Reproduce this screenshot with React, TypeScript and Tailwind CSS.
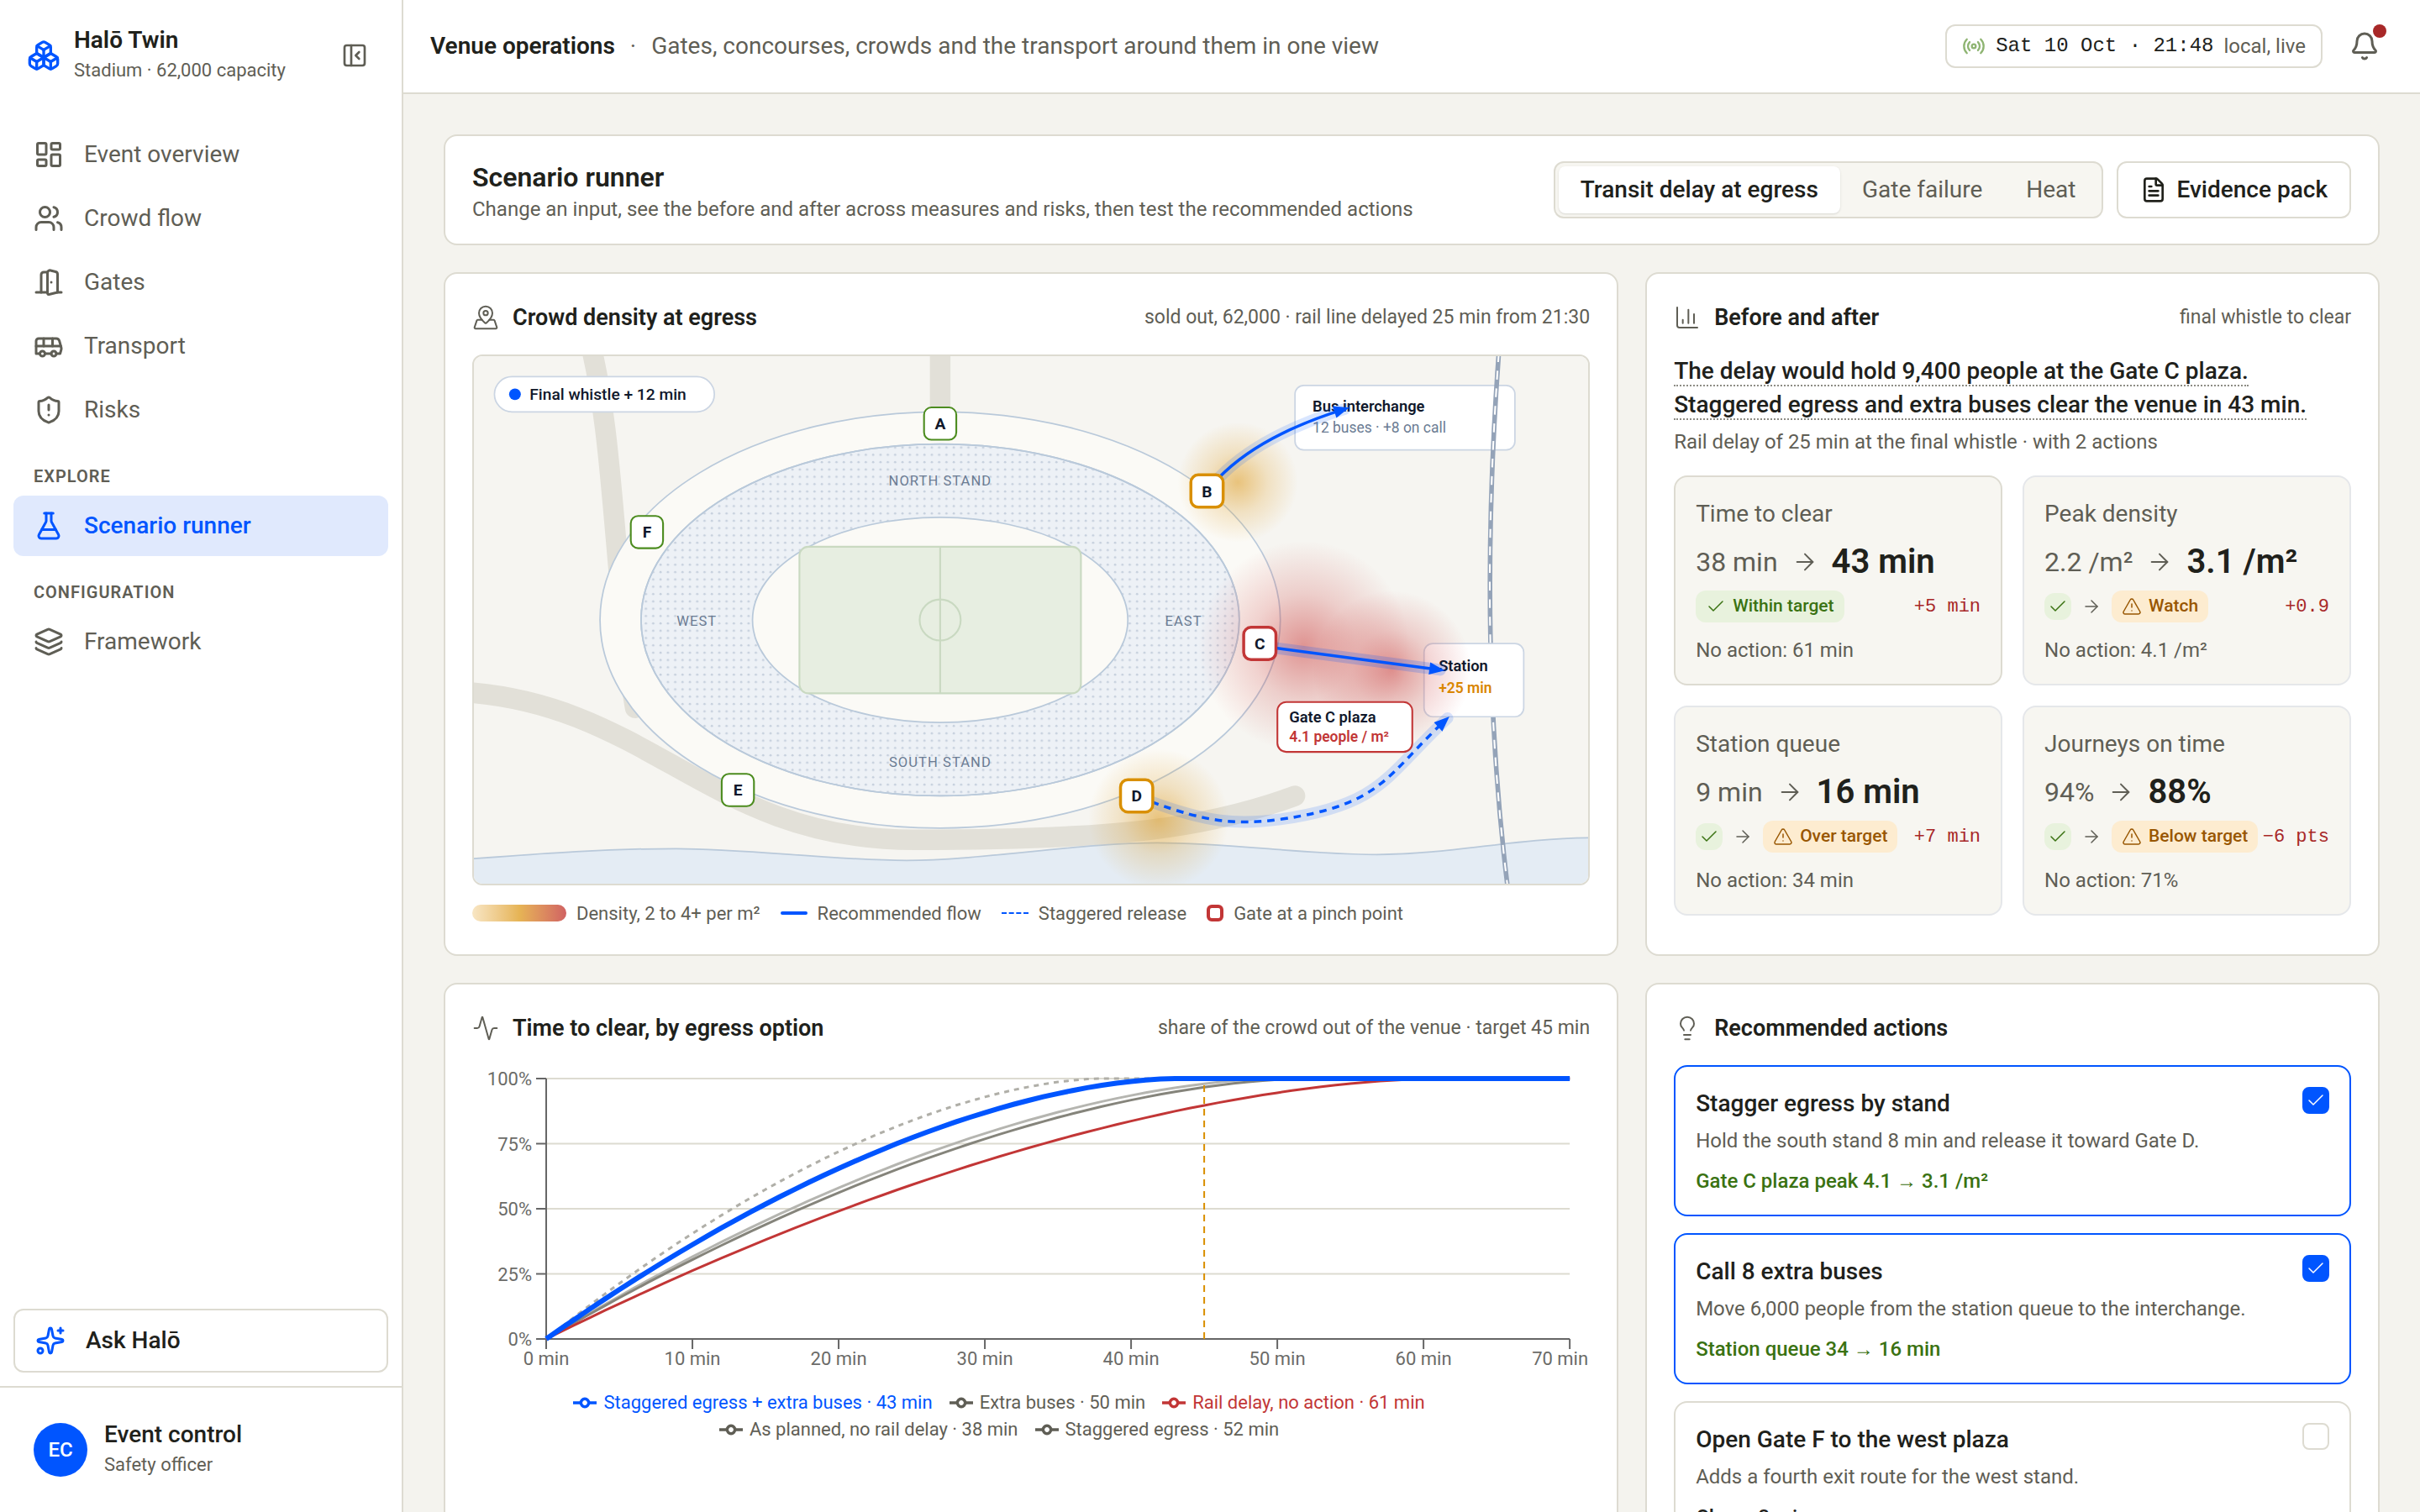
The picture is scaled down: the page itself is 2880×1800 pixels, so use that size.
import React, { useState } from 'react'
import {
  Activity,
  ArrowRight,
  Bell,
  Boxes,
  Bus,
  ChartColumn,
  Check,
  FileText,
  FlaskConical,
  Layers,
  LayoutDashboard,
  Lightbulb,
  MapPinned,
  PanelLeftClose,
  Radio,
  ShieldAlert,
  Sparkles,
  TriangleAlert,
  Users,
  type LucideIcon
} from 'lucide-react'

interface NavEntry {
  icon: LucideIcon | React.FC<{ className?: string }>
  label: string
}

interface Measure {
  title: string
  before: string
  after: string
  wasOnTarget: boolean
  status: string
  delta: string
  noAction: string
}

interface Action {
  id: string
  title: string
  description: string
  effect: string
}

// Double door, used for the gates page
const DoorIcon: React.FC<{ className?: string }> = ({ className }) => (
  <svg viewBox="0 0 24 24" fill="none" stroke="currentColor" strokeWidth={2} strokeLinecap="round" strokeLinejoin="round" className={className}>
    <path d="M11 20H2" />
    <path d="M11 4.562v16.157a1 1 0 0 0 1.242.97L19 20V5.562a2 2 0 0 0-1.515-1.94l-4-1A2 2 0 0 0 11 4.561z" />
    <path d="M11 4H8a2 2 0 0 0-2 2v14" />
    <path d="M14 12h.01" />
    <path d="M22 20h-3" />
  </svg>
)

const MAIN_NAV: NavEntry[] = [
  { icon: LayoutDashboard, label: 'Event overview' },
  { icon: Users, label: 'Crowd flow' },
  { icon: DoorIcon, label: 'Gates' },
  { icon: Bus, label: 'Transport' },
  { icon: ShieldAlert, label: 'Risks' }
]

const SCENARIOS = ['Transit delay at egress', 'Gate failure', 'Heat']

const MEASURES: Measure[] = [
  { title: 'Time to clear', before: '38 min', after: '43 min', wasOnTarget: false, status: 'Within target', delta: '+5 min', noAction: '61 min' },
  { title: 'Peak density', before: '2.2 /m²', after: '3.1 /m²', wasOnTarget: true, status: 'Watch', delta: '+0.9', noAction: '4.1 /m²' },
  { title: 'Station queue', before: '9 min', after: '16 min', wasOnTarget: true, status: 'Over target', delta: '+7 min', noAction: '34 min' },
  { title: 'Journeys on time', before: '94%', after: '88%', wasOnTarget: true, status: 'Below target', delta: '−6 pts', noAction: '71%' }
]

const ACTIONS: Action[] = [
  { id: 'stagger', title: 'Stagger egress by stand', description: 'Hold the south stand 8 min and release it toward Gate D.', effect: 'Gate C plaza peak 4.1 → 3.1 /m²' },
  { id: 'buses', title: 'Call 8 extra buses', description: 'Move 6,000 people from the station queue to the interchange.', effect: 'Station queue 34 → 16 min' },
  { id: 'gate-f', title: 'Open Gate F to the west plaza', description: 'Adds a fourth exit route for the west stand.', effect: 'Clears 3 min sooner' }
]

const GATES = [
  { id: 'A', x: 318, y: 46, color: '#4c8c1f', width: 1.2 },
  { id: 'B', x: 500, y: 92, color: '#d98f00', width: 2 },
  { id: 'C', x: 536, y: 196, color: '#c23636', width: 2 },
  { id: 'D', x: 452, y: 300, color: '#d98f00', width: 2 },
  { id: 'E', x: 180, y: 296, color: '#4c8c1f', width: 1.2 },
  { id: 'F', x: 118, y: 120, color: '#4c8c1f', width: 1.2 }
]

const NavLink: React.FC<{ entry: NavEntry; active?: boolean }> = ({ entry, active }) => {
  const { icon: Icon, label } = entry
  return (
    <a
      href="#"
      aria-current={active ? 'page' : undefined}
      className={`flex h-18 items-center gap-6 rounded-xl px-6 text-[28px] leading-10 ${active ? 'bg-[#e0e9fd] font-medium text-[#0055ff]' : 'text-[#5f5e55]'}`}
    >
      <Icon className="size-9" />
      {label}
    </a>
  )
}

const NavHeading: React.FC<{ children: React.ReactNode }> = ({ children }) => (
  <h2 className="flex h-[66px] items-center px-6 pt-5 text-[20px] font-semibold tracking-wider text-[#5f5e55] uppercase">{children}</h2>
)

const Sidebar = () => (
  <aside className="flex w-[480px] shrink-0 flex-col border-r-2 border-[#dddbd1] bg-white">
    <div className="flex h-[132px] items-center gap-4 pr-10 pl-8">
      <Boxes className="size-10 text-[#0055ff]" />
      <div className="flex-1">
        <div className="text-[28px] leading-9 font-semibold">Halō Twin</div>
        <div className="text-[22px] leading-9 text-[#5f5e55]">Stadium · 62,000 capacity</div>
      </div>
      <button type="button" aria-label="Collapse sidebar" className="text-[#5f5e55]">
        <PanelLeftClose className="size-8" />
      </button>
    </div>
    <nav className="flex flex-1 flex-col px-4 pt-4">
      <div className="flex flex-col gap-1">
        {MAIN_NAV.map((entry) => (
          <NavLink key={entry.label} entry={entry} />
        ))}
      </div>
      <NavHeading>Explore</NavHeading>
      <NavLink entry={{ icon: FlaskConical, label: 'Scenario runner' }} active />
      <NavHeading>Configuration</NavHeading>
      <NavLink entry={{ icon: Layers, label: 'Framework' }} />
    </nav>
    <div className="px-4 pb-4">
      <button type="button" className="flex h-[76px] w-full items-center gap-6 rounded-xl border-2 border-[#dddbd1] px-6 text-[28px] font-medium">
        <Sparkles className="size-9 text-[#0055ff]" />
        Ask Halō
      </button>
    </div>
    <div className="flex h-[150px] items-center gap-5 border-t-2 border-[#dddbd1] px-10">
      <div className="flex size-16 items-center justify-center rounded-full bg-[#0055ff] text-[24px] font-medium text-white">EC</div>
      <div>
        <div className="text-[28px] leading-9 font-medium">Event control</div>
        <div className="text-[22px] leading-9 text-[#5f5e55]">Safety officer</div>
      </div>
    </div>
  </aside>
)

const TopBar = () => (
  <header className="flex h-28 shrink-0 items-center justify-between border-b-2 border-[#dddbd1] bg-white px-8">
    <div className="flex items-center gap-[18px] text-[28px]">
      <h1 className="font-semibold">Venue operations</h1>
      <span className="text-[#5f5e55]">·</span>
      <p className="text-[#5f5e55]">Gates, concourses, crowds and the transport around them in one view</p>
    </div>
    <div className="flex items-center gap-8">
      <div className="flex h-[52px] items-center gap-3 rounded-xl border-2 border-[#dddbd1] px-[18px]">
        <Radio className="size-7 text-[#8fb573]" />
        <time className="font-[family-name:'Liberation_Mono',monospace] text-[24px]">Sat 10 Oct · 21:48</time>
        <span className="text-[24px] text-[#5f5e55]">local, live</span>
      </div>
      <button type="button" aria-label="Notifications" className="relative mr-4 text-[#5f5e55]">
        <Bell className="size-9" />
        <span className="absolute -top-2 -right-2 size-4 rounded-full bg-[#a82828]" />
      </button>
    </div>
  </header>
)

const CardHeading: React.FC<{ icon: LucideIcon; title: string; note?: string }> = ({ icon: Icon, title, note }) => (
  <div className="mb-6 flex h-10 items-center gap-4">
    <Icon className="size-8 text-[#5f5e55]" strokeWidth={1.5} />
    <h2 className="flex-1 text-[27px] font-semibold">{title}</h2>
    {note && <p className="text-[23px] text-[#5f5e55]">{note}</p>}
  </div>
)

const StadiumMap = () => (
  <div className="overflow-hidden rounded-xl border-2 border-[#dddbd1]">
    <svg viewBox="0 0 760 360" className="block w-full" role="img" aria-label="Crowd density around the stadium">
      <defs>
        <pattern id="seats" width="5" height="5" patternUnits="userSpaceOnUse">
          <circle cx="2.3" cy="2.3" r="0.8" fill="#c6d0dd" />
        </pattern>
        <radialGradient id="heat-red">
          <stop offset="0" stopColor="#c83232" stopOpacity="0.5" />
          <stop offset="0.5" stopColor="#c83232" stopOpacity="0.2" />
          <stop offset="1" stopColor="#c83232" stopOpacity="0" />
        </radialGradient>
        <radialGradient id="heat-amber">
          <stop offset="0" stopColor="#de9a1c" stopOpacity="0.55" />
          <stop offset="0.5" stopColor="#de9a1c" stopOpacity="0.22" />
          <stop offset="1" stopColor="#de9a1c" stopOpacity="0" />
        </radialGradient>
        <marker id="arrow" viewBox="0 0 10 8" refX="7" refY="4" markerWidth="11" markerHeight="8.4" markerUnits="userSpaceOnUse" orient="auto">
          <path d="M0 0 L10 4 L0 8 z" fill="#0055ff" />
        </marker>
      </defs>

      <rect width="760" height="360" fill="#f6f5f1" />
      <g fill="none" stroke="#e2e0d8" strokeWidth="14" strokeLinecap="round">
        <path d="M80 -6 C 96 60, 96 160, 110 240" />
        <path d="M318 -6 V 50" />
        <path d="M-10 229 C 120 236, 160 330, 300 330 S 500 322, 560 300" />
      </g>
      <path
        d="M-2 343 C 50 339, 90 336, 138 336 S 245 344, 295 344 S 415 332, 466 332 S 566 340, 616 340 S 710 329, 762 328.6 V 362 H -2 Z"
        fill="#e4ecf4"
        stroke="#b9c9da"
      />

      <g stroke="#b9c9da" strokeWidth="1">
        <ellipse cx="318" cy="180" rx="232" ry="142" fill="#fbfaf6" />
        <ellipse cx="318" cy="180" rx="204" ry="120" fill="#edf1f6" />
        <ellipse cx="318" cy="180" rx="204" ry="120" fill="url(#seats)" />
        <ellipse cx="318" cy="180" rx="128" ry="70" fill="#fbfaf6" />
      </g>
      <g fill="none" stroke="#c9d9c1" strokeWidth="1.2">
        <rect x="222" y="130" width="192" height="100" rx="6" fill="#e7eee1" />
        <path d="M318 130 V 230" />
        <circle cx="318" cy="180" r="14" />
      </g>
      <g fill="#6b7c93" fontSize="9.5" letterSpacing="0.6" textAnchor="middle">
        <text x="318" y="88">NORTH STAND</text>
        <text x="318" y="280">SOUTH STAND</text>
        <text x="152" y="184">WEST</text>
        <text x="484" y="184">EAST</text>
      </g>

      <rect x="560" y="20" width="150" height="44" rx="6" fill="#fff" stroke="#cbd5e3" />
      <path d="M699 -2 C 690 120, 690 240, 705 362" fill="none" stroke="#94a3b8" strokeWidth="3.2" />
      <path d="M699 -2 C 690 120, 690 240, 705 362" fill="none" stroke="#fff" strokeWidth="1.2" strokeDasharray="6 6" />
      <rect x="648" y="196" width="68" height="50" rx="6" fill="#fff" stroke="#cbd5e3" />

      <circle cx="566" cy="198" r="72" fill="url(#heat-red)" />
      <circle cx="626" cy="214" r="54" fill="url(#heat-red)" />
      <circle cx="521" cy="86" r="41" fill="url(#heat-amber)" />
      <circle cx="467" cy="316" r="48" fill="url(#heat-amber)" />

      <g fontWeight="600" fontSize="10.5" fill="#10182b">
        <text x="572" y="38">Bus interchange</text>
        <text x="658" y="215">Station</text>
      </g>
      <text x="572" y="52" fontSize="10" fill="#6b7c93">12 buses · +8 on call</text>
      <text x="658" y="230" fontSize="10" fontWeight="600" fill="#d98600">+25 min</text>

      <path d="M508 83 Q 536 54, 594 36" fill="none" stroke="#0055ff" strokeWidth="8" strokeLinecap="round" opacity="0.15" />
      <path d="M546 199 L 659 214" fill="none" stroke="#0055ff" strokeWidth="8" strokeLinecap="round" opacity="0.2" />
      <path d="M462 304 C 500 318, 520 320, 550 316 C 620 306, 622 286, 664 247" fill="none" stroke="#0055ff" strokeWidth="8" strokeLinecap="round" opacity="0.15" />
      <g fill="none" stroke="#0055ff" strokeWidth="2">
        <path d="M508 83 Q 536 54, 594 36" markerEnd="url(#arrow)" />
        <path d="M546 199 L 659 214" markerEnd="url(#arrow)" />
        <path d="M462 304 C 500 318, 520 320, 550 316 C 620 306, 622 286, 663 248" strokeDasharray="5 4" markerEnd="url(#arrow)" />
      </g>

      <rect x="548" y="236" width="92" height="34" rx="6" fill="#fff" stroke="#c23636" strokeWidth="1.2" />
      <text x="556" y="250" fontSize="10.5" fontWeight="600" fill="#10182b">Gate C plaza</text>
      <text x="556" y="263" fontSize="10" fontWeight="600" fill="#c23636">4.1 people / m²</text>

      {GATES.map((gate) => (
        <g key={gate.id}>
          <rect x={gate.x - 11} y={gate.y - 11} width="22" height="22" rx="5" fill="#fff" stroke={gate.color} strokeWidth={gate.width} />
          <text x={gate.x} y={gate.y + 4} textAnchor="middle" fontSize="11" fontWeight="700" fill="#10182b">{gate.id}</text>
        </g>
      ))}

      <rect x="14" y="14" width="150" height="24" rx="12" fill="#fff" stroke="#cbd5e3" />
      <circle cx="28" cy="26" r="4" fill="#0055ff" />
      <text x="38" y="30" fontSize="11" fontWeight="500" fill="#10182b">Final whistle + 12 min</text>
    </svg>
  </div>
)

const MapLegend = () => (
  <ul className="mt-4 flex h-[34px] items-center gap-6 text-[22px] text-[#5f5e55]">
    <li className="flex items-center gap-3">
      <span className="h-5 w-28 rounded-full bg-linear-to-r from-[#f8e6c4] via-[#e6b455] to-[#d06262]" />
      Density, 2 to 4+ per m²
    </li>
    <li className="flex items-center gap-3">
      <span className="h-1 w-8 rounded-full bg-[#0055ff]" />
      Recommended flow
    </li>
    <li className="flex items-center gap-3">
      <span className="w-8 border-t-2 border-dashed border-[#0055ff]" />
      Staggered release
    </li>
    <li className="flex items-center gap-3">
      <span className="size-5 rounded-md border-4 border-[#c23636]" />
      Gate at a pinch point
    </li>
  </ul>
)

const MeasureTile: React.FC<{ measure: Measure; selected: boolean }> = ({ measure, selected }) => (
  <div className={`rounded-2xl border-2 bg-[#f7f6f1] px-6 pt-6 pb-[22px] ${selected ? 'border-[#dddbd1]' : 'border-[#e5e7ea]'}`}>
    <h3 className="text-[28px] leading-10 text-[#5f5e55]">{measure.title}</h3>
    <div className="mt-3 flex h-[50px] items-center gap-4">
      <span className="text-[32px] text-[#5f5e55]">{measure.before}</span>
      <ArrowRight className="size-8 text-[#5f5e55]" strokeWidth={1.5} />
      <span className="text-[40px] font-semibold">{measure.after}</span>
    </div>
    <div className="mt-2 flex h-10 items-center">
      {measure.wasOnTarget ? (
        <>
          <span className="flex size-8 shrink-0 items-center justify-center rounded-xl bg-[#e8f2dd] text-[#3a7212]">
            <Check className="size-6" strokeWidth={1.5} />
          </span>
          <ArrowRight className="mx-3 size-6 text-[#5f5e55]" strokeWidth={1.5} />
          <span className="flex h-[38px] shrink-0 items-center gap-2 rounded-xl bg-[#fdecd0] px-3 text-[21px] font-medium text-[#985600]">
            <TriangleAlert className="size-6" strokeWidth={1.5} />
            {measure.status}
          </span>
        </>
      ) : (
        <span className="flex h-[38px] items-center gap-2 rounded-xl bg-[#e8f2dd] px-3 text-[21px] font-medium text-[#3a7212]">
          <Check className="size-6" strokeWidth={1.5} />
          {measure.status}
        </span>
      )}
      <span className="ml-auto shrink-0 font-[family-name:'Liberation_Mono',monospace] text-[22px] text-[#a82828]">{measure.delta}</span>
    </div>
    <p className="mt-3.5 text-[24px] leading-9 text-[#5f5e55]">No action: {measure.noAction}</p>
  </div>
)

// Share of the crowd that has left after t minutes, when the venue clears at `total`
const shareOut = (t: number, total: number) => (t >= total ? 1 : 1 - Math.pow(1 - t / total, 1.7))

const toX = (minute: number) => 88 + minute * 17.4
const toY = (share: number) => 326 - share * 310

const linePath = (total: number) =>
  Array.from({ length: 71 }, (_, t) => `${t === 0 ? 'M' : 'L'}${toX(t).toFixed(1)} ${toY(shareOut(t, total)).toFixed(1)}`).join(' ')

const SERIES = [
  { total: 38, color: '#b0afa8', dash: '6 6' },
  { total: 50, color: '#b5b5b0' },
  { total: 52, color: '#85847b' },
  { total: 61, color: '#c23636' }
]

const CHART_LEGEND = [
  [
    { label: 'Staggered egress + extra buses · 43 min', color: 'text-[#0055ff]' },
    { label: 'Extra buses · 50 min', color: 'text-[#5f5e55]' },
    { label: 'Rail delay, no action · 61 min', color: 'text-[#c23636]' }
  ],
  [
    { label: 'As planned, no rail delay · 38 min', color: 'text-[#5f5e55]' },
    { label: 'Staggered egress · 52 min', color: 'text-[#5f5e55]' }
  ]
]

const ClearChart = () => (
  <>
    <svg viewBox="0 0 1330 370" className="block w-full" role="img" aria-label="Time to clear, by egress option">
      {[0, 25, 50, 75, 100].map((p) => (
        <g key={p}>
          {p > 0 && <path d={`M88 ${toY(p / 100)} H 1306`} stroke="#dddbd1" strokeWidth="2" />}
          <path d={`M76 ${toY(p / 100)} H 88`} stroke="#666" strokeWidth="2" />
          <text x="71" y={toY(p / 100) + 8} textAnchor="end" fontSize="22" fill="#6b6b68">{p}%</text>
        </g>
      ))}
      <path d="M88 16 V 326 H 1306" fill="none" stroke="#666" strokeWidth="2" />
      {[0, 10, 20, 30, 40, 50, 60, 70].map((m) => (
        <g key={m}>
          <path d={`M${toX(m)} 326 V 338`} stroke="#666" strokeWidth="2" />
          <text x={m === 70 ? 1328 : toX(m)} y="357" textAnchor={m === 70 ? 'end' : 'middle'} fontSize="22" fill="#6b6b68">{m} min</text>
        </g>
      ))}
      {SERIES.map((s) => (
        <path key={s.total} d={linePath(s.total)} fill="none" stroke={s.color} strokeWidth="3" strokeDasharray={s.dash} />
      ))}
      <path d={`M${toX(45)} 326 V 16`} stroke="#d98f00" strokeWidth="2" strokeDasharray="8 6" />
      <path d={linePath(43)} fill="none" stroke="#0055ff" strokeWidth="6" />
    </svg>
    <div className="mt-4 flex flex-col pr-[76px] text-[22px] leading-8">
      {CHART_LEGEND.map((row, index) => (
        <ul key={index} className="flex justify-center gap-5">
          {row.map((item) => (
            <li key={item.label} className={`flex items-center gap-2 ${item.color}`}>
              <svg viewBox="0 0 32 32" className="size-7" fill="none" stroke="currentColor" strokeWidth="4">
                <path d="M0 16h10.67a5.33 5.33 0 1 1 10.66 0H32M21.33 16a5.33 5.33 0 1 1-10.66 0" />
              </svg>
              {item.label}
            </li>
          ))}
        </ul>
      ))}
    </div>
  </>
)

interface ActionCardProps {
  action: Action
  checked: boolean
  onToggle: () => void
}

const ActionCard: React.FC<ActionCardProps> = ({ action, checked, onToggle }) => (
  <label htmlFor={action.id} className={`flex items-start gap-4 rounded-2xl border-2 px-6 pt-6 pb-[22px] ${checked ? 'border-[#0055ff]' : 'border-[#dddbd1]'}`}>
    <span className="flex-1">
      <span className="block text-[28px] leading-10 font-medium">{action.title}</span>
      <span className="mt-1.5 block text-[24px] leading-9 text-[#5f5e55]">{action.description}</span>
      <span className={`mt-3 block text-[24px] leading-9 font-medium ${checked ? 'text-[#3a7212]' : 'text-[#20211b]'}`}>{action.effect}</span>
    </span>
    <span className="grid place-items-center">
      <input
        id={action.id}
        type="checkbox"
        checked={checked}
        onChange={onToggle}
        className="size-8 appearance-none rounded-lg border-2 border-[#dddbd1] bg-white [grid-area:1/1] checked:border-[#0055ff] checked:bg-[#0055ff]"
      />
      {checked && <Check className="pointer-events-none size-6 text-white [grid-area:1/1]" strokeWidth={1.5} />}
    </span>
  </label>
)

const Card: React.FC<{ children: React.ReactNode }> = ({ children }) => (
  <section className="rounded-2xl border-2 border-[#dddbd1] bg-white p-8">{children}</section>
)

const App = () => {
  const [scenario, setScenario] = useState(SCENARIOS[0])
  const [selected, setSelected] = useState(['stagger', 'buses'])

  const toggle = (id: string) => {
    setSelected((ids) => (ids.includes(id) ? ids.filter((i) => i !== id) : [...ids, id]))
  }

  return (
    <div className="flex h-screen overflow-hidden bg-[#f4f3ee] font-[family-name:Roboto,sans-serif] text-[#20211b]">
      <Sidebar />
      <div className="flex min-w-0 flex-1 flex-col">
        <TopBar />
        <main className="flex min-h-0 flex-1 flex-col gap-8 overflow-y-auto p-12 [scrollbar-width:none]">
          <section className="flex h-[132px] shrink-0 items-center justify-between rounded-2xl border-2 border-[#dddbd1] bg-white px-8">
            <div className="pt-1.5">
              <h2 className="text-[32px] leading-10 font-semibold">Scenario runner</h2>
              <p className="text-[24px] leading-9 text-[#5f5e55]">
                Change an input, see the before and after across measures and risks, then test the recommended actions
              </p>
            </div>
            <div className="flex h-[68px] gap-4">
              <div className="flex rounded-xl border-2 border-[#dddbd1] bg-[#f7f6f1] p-1">
                {SCENARIOS.map((name) => (
                  <button
                    key={name}
                    type="button"
                    aria-pressed={scenario === name}
                    onClick={() => setScenario(name)}
                    className={`rounded-lg px-[26px] text-[28px] ${scenario === name ? 'bg-white font-medium shadow-sm' : 'text-[#5f5e55]'}`}
                  >
                    {name}
                  </button>
                ))}
              </div>
              <button type="button" className="flex items-center gap-3 rounded-xl border-2 border-[#dddbd1] px-[26px] text-[28px] font-medium">
                <FileText className="size-8" />
                Evidence pack
              </button>
            </div>
          </section>

          <div className="grid shrink-0 grid-cols-[minmax(0,8fr)_minmax(0,5fr)] gap-8">
            <Card>
              <CardHeading icon={MapPinned} title="Crowd density at egress" note="sold out, 62,000 · rail line delayed 25 min from 21:30" />
              <StadiumMap />
              <MapLegend />
            </Card>

            <Card>
              <CardHeading icon={ChartColumn} title="Before and after" note="final whistle to clear" />
              <p className="text-[28px] leading-10 font-medium">
                <span className="border-b-2 border-dotted border-[#8d8c84]">The delay would hold 9,400 people at the Gate C plaza.</span>
                <br />
                <span className="border-b-2 border-dotted border-[#8d8c84]">Staggered egress and extra buses clear the venue in 43 min.</span>
              </p>
              <p className="mt-1 mb-5 text-[24px] leading-10 text-[#5f5e55]">Rail delay of 25 min at the final whistle · with 2 actions</p>
              <div className="grid grid-cols-2 gap-6">
                {MEASURES.map((measure, index) => (
                  <MeasureTile key={measure.title} measure={measure} selected={index === 0} />
                ))}
              </div>
            </Card>

            <Card>
              <CardHeading icon={Activity} title="Time to clear, by egress option" note="share of the crowd out of the venue · target 45 min" />
              <ClearChart />
            </Card>

            <Card>
              <CardHeading icon={Lightbulb} title="Recommended actions" />
              <div className="flex flex-col gap-5">
                {ACTIONS.map((action) => (
                  <ActionCard key={action.id} action={action} checked={selected.includes(action.id)} onToggle={() => toggle(action.id)} />
                ))}
              </div>
            </Card>
          </div>
        </main>
      </div>
    </div>
  )
}

export default App
